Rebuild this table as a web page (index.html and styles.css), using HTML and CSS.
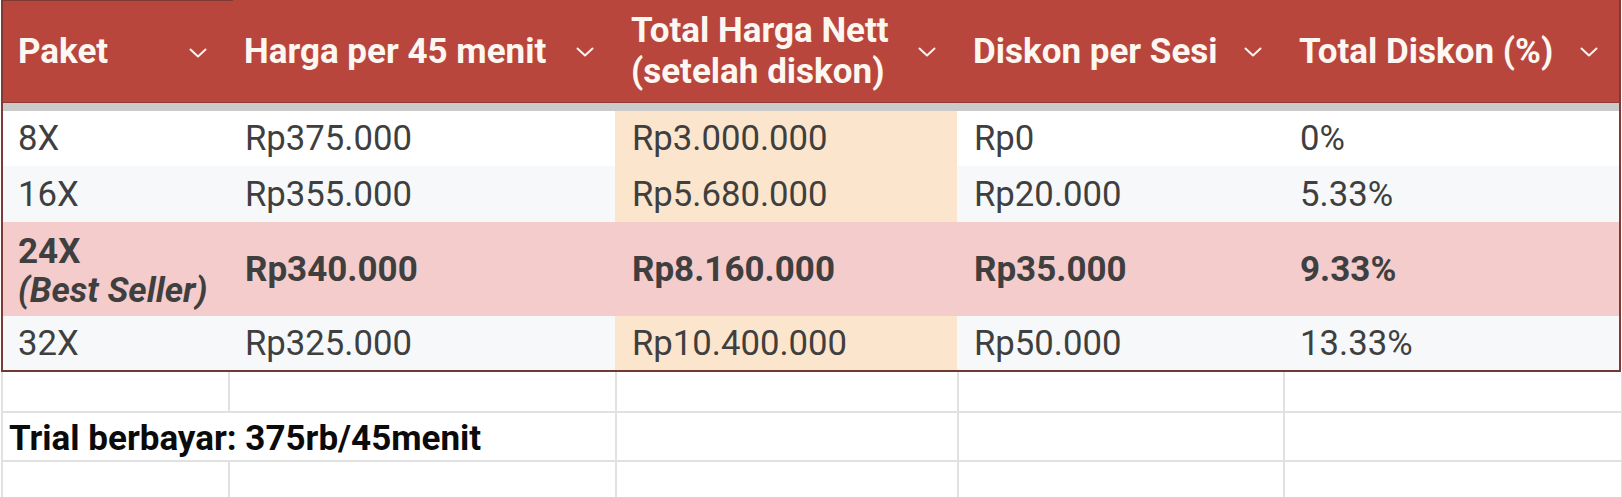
FILE: index.html
```html
<!DOCTYPE html>
<html lang="id">
<head>
<meta charset="utf-8">
<title>Paket Harga</title>
<link rel="stylesheet" href="styles.css">
</head>
<body>
<div class="sheet">
  <div class="table">
    <div class="head">
      <div class="hcell first"><span>Paket</span><svg class="chev" viewBox="0 0 18 10"><polyline points="1.5,1.5 9,8.5 16.5,1.5"/></svg></div>
      <div class="hcell"><span>Harga per 45 menit</span><svg class="chev" viewBox="0 0 18 10"><polyline points="1.5,1.5 9,8.5 16.5,1.5"/></svg></div>
      <div class="hcell"><span>Total Harga Nett<br>(setelah diskon)</span><svg class="chev" viewBox="0 0 18 10"><polyline points="1.5,1.5 9,8.5 16.5,1.5"/></svg></div>
      <div class="hcell"><span>Diskon per Sesi</span><svg class="chev" viewBox="0 0 18 10"><polyline points="1.5,1.5 9,8.5 16.5,1.5"/></svg></div>
      <div class="hcell"><span>Total Diskon (%)</span><svg class="chev" viewBox="0 0 18 10"><polyline points="1.5,1.5 9,8.5 16.5,1.5"/></svg></div>
    </div>
    <div class="freeze"></div>
    <div class="row r1">
      <div class="cell">8X</div>
      <div class="cell">Rp375.000</div>
      <div class="cell peach">Rp3.000.000</div>
      <div class="cell">Rp0</div>
      <div class="cell">0%</div>
    </div>
    <div class="row r2">
      <div class="cell">16X</div>
      <div class="cell">Rp355.000</div>
      <div class="cell peach">Rp5.680.000</div>
      <div class="cell">Rp20.000</div>
      <div class="cell">5.33%</div>
    </div>
    <div class="row r3">
      <div class="cell multi"><span>24X<br><em>(Best Seller)</em></span></div>
      <div class="cell">Rp340.000</div>
      <div class="cell">Rp8.160.000</div>
      <div class="cell">Rp35.000</div>
      <div class="cell">9.33%</div>
    </div>
    <div class="row r4">
      <div class="cell">32X</div>
      <div class="cell">Rp325.000</div>
      <div class="cell peach">Rp10.400.000</div>
      <div class="cell">Rp50.000</div>
      <div class="cell">13.33%</div>
    </div>
  </div>
  <div class="grid">
    <div class="g g1"></div><div class="g"></div><div class="g"></div><div class="g"></div><div class="g"></div>
    <div class="g g1 note"><span>Trial berbayar: 375rb/45menit</span></div><div class="g"></div><div class="g"></div><div class="g"></div>
    <div class="g g1 last"></div><div class="g last"></div><div class="g last"></div><div class="g last"></div><div class="g last"></div>
  </div>
</div>
</body>
</html>
```

FILE: styles.css
```css
* { box-sizing: border-box; }
html, body {
  margin: 0;
  padding: 0;
  background: #ffffff;
}
body {
  font-family: Roboto, "Liberation Sans", Arial, sans-serif;
  width: 1622px;
  height: 497px;
  overflow: hidden;
}
.sheet {
  padding-left: 1px;
}
.table {
  width: 1620px;
  border-left: 2px solid #7e3a35;
  border-right: 2px solid #7e3a35;
  border-bottom: 2px solid #6e3a36;
}
.head, .row {
  display: grid;
  grid-template-columns: 225px 387px 342px 326px 336px;
}
.head {
  height: 103px;
  background: #b9463c;
  border-bottom: 1px solid #8f3a33;
}
.hcell {
  display: flex;
  align-items: center;
  justify-content: space-between;
  padding: 0 21px 0 16px;
  color: #fdf7f2;
  font-weight: 700;
  font-size: 35px;
  line-height: 41px;
}
.hcell.first {
  padding-left: 15px;
  border-top: 1px solid #7e3a35;
  margin-right: -5px;
  padding-right: 26px;
}
.chev {
  width: 18px;
  height: 10px;
  flex: none;
  margin-top: 2px;
}
.chev polyline {
  fill: none;
  stroke: #fdf3ee;
  stroke-width: 2;
  stroke-linecap: round;
  stroke-linejoin: round;
}
.freeze {
  height: 8px;
  background: #cacaca;
}
.row {
  color: #3f3f40;
  font-size: 34.7px;
  line-height: 37px;
}
.r1 { height: 55px; background: #ffffff; }
.r2 { height: 56px; background: #f6f8f9; }
.r3 { height: 94px; background: #f4cccc; font-weight: 700; font-size: 35px; line-height: 39px; }
.r4 { height: 54px; background: #f6f8f9; }
.cell {
  display: flex;
  align-items: center;
  padding-left: 17px;
  white-space: nowrap;
}
.cell:first-child { padding-left: 15px; }
.cell.multi { padding-top: 4px; }
.peach { background: #fce5cd; }
.r3 em {
  font-style: italic;
  font-weight: 700;
}
.grid {
  display: grid;
  width: 1620px;
  grid-template-columns: 227px 387px 342px 326px 338px;
  grid-template-rows: 41px 49px 35px;
  border-left: 2px solid #e1e1e1;
}
.g {
  border-right: 2px solid #e1e1e1;
  border-bottom: 2px solid #e1e1e1;
}
.g.last { border-bottom: none; }
.note {
  grid-column: 1 / span 2;
  display: flex;
  align-items: center;
  padding: 4px 0 0 6px;
  font-weight: 700;
  font-size: 35px;
  color: #0b0b0b;
}
```
